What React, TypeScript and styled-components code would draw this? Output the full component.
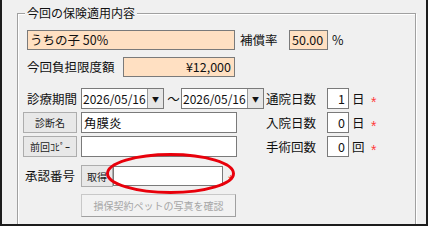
import React from 'react';
import styled, { createGlobalStyle } from 'styled-components';

const GlobalStyle = createGlobalStyle`
  html, body {
    margin: 0;
    padding: 0;
    background: #fff;
  }
  body {
    font-family: "Noto Sans CJK JP", "Noto Sans", sans-serif;
    color: #111;
  }
`;

const Window = styled.div`
  box-sizing: border-box;
  width: 428px;
  height: 226px;
  background: #f0f0f0;
  border: 2px solid #1c1c1c;
  border-top: none;
  overflow: hidden;
`;

const Group = styled.div`
  position: relative;
  box-sizing: border-box;
  width: 399px;
  height: 240px;
  margin: 13px 0 0 15px;
  padding: 16px 0 0 5px;
  border: 1px solid #a0a0a0;
  box-shadow: inset 1px 1px 0 #fff, 1px 1px 0 #fff;
  display: flex;
  flex-direction: column;
`;

const Legend = styled.span`
  position: absolute;
  top: -8px;
  left: 7px;
  padding: 0 2px;
  background: #f0f0f0;
  font-size: 12px;
  line-height: 14px;
  white-space: nowrap;
`;

const Row = styled.div<{ $cols: string; $h: number; $mt?: number; $pl?: number }>`
  display: grid;
  grid-template-columns: ${p => p.$cols};
  align-items: center;
  height: ${p => p.$h}px;
  margin-top: ${p => p.$mt ?? 0}px;
  padding-left: ${p => p.$pl ?? 0}px;
`;

const Section = styled.div`
  display: grid;
  grid-template-columns: 243px auto;
  grid-auto-rows: 21px;
  row-gap: 3px;
  margin-top: 11px;
`;

const Label = styled.span`
  font-size: 12.5px;
  line-height: 16px;
  white-space: nowrap;
`;

const Field = styled.div<{ $w: number; $h?: number; $peach?: boolean; $right?: boolean }>`
  box-sizing: border-box;
  width: ${p => p.$w}px;
  height: ${p => p.$h ?? 20}px;
  border: 1px solid #7a7a7a;
  background: ${p => (p.$peach ? '#ffe0c2' : '#fff')};
  padding: 0 ${p => (p.$right ? 3 : 2)}px 0 2px;
  font-size: 12.5px;
  line-height: ${p => (p.$h ?? 20) - 2}px;
  text-align: ${p => (p.$right ? 'right' : 'left')};
  white-space: nowrap;
  overflow: hidden;
`;

const Picker = styled.div`
  box-sizing: border-box;
  display: flex;
  width: 83px;
  height: 21px;
  border: 1px solid #7a7a7a;
  background: #fff;
`;

const PickerText = styled.span`
  flex: 1;
  padding-left: 1px;
  font-size: 12px;
  line-height: 19px;
  white-space: nowrap;
  overflow: hidden;
`;

const PickerDrop = styled.span`
  width: 15px;
  border-left: 1px solid #9a9a9a;
  background: #e6e6e6;
  display: flex;
  align-items: center;
  justify-content: center;
  font-size: 7px;
  color: #111;
`;

const Tilde = styled.span`
  font-size: 12.5px;
  text-align: center;
`;

const Btn = styled.button<{ $w: number; $h: number }>`
  box-sizing: border-box;
  width: ${p => p.$w}px;
  height: ${p => p.$h}px;
  padding: 0;
  border: 1px solid #adadad;
  background: #e8e8e8;
  font-family: inherit;
  font-size: 10px;
  color: #222;
  white-space: nowrap;
  overflow: hidden;
`;

const DisabledBtn = styled.button`
  box-sizing: border-box;
  width: 155px;
  height: 23px;
  padding: 0;
  border: 1px solid #c8c8c8;
  border-right-color: #a0a0a0;
  border-bottom-color: #a0a0a0;
  background: #f2f2f2;
  font-family: inherit;
  font-size: 10px;
  color: #a6a6a6;
  white-space: nowrap;
`;

const Required = styled.span`
  color: #ff3b3b;
  font-family: "Liberation Sans", sans-serif;
  font-size: 14px;
  line-height: 14px;
  padding-top: 7px;
`;

const Counter = styled.div`
  display: grid;
  grid-template-columns: 61px 25px 19px auto;
  align-items: center;
`;

const Mark = styled.svg`
  position: absolute;
  left: 86px;
  top: 137px;
  pointer-events: none;
`;

type CountProps = { label: string; value: string; unit: string };

const CountRow = ({ label, value, unit }: CountProps) => (
  <Counter>
    <Label>{label}</Label>
    <Field $w={22} $h={21} $right>{value}</Field>
    <Label>{unit}</Label>
    <Required>*</Required>
  </Counter>
);

const DatePicker = ({ value }: { value: string }) => (
  <Picker>
    <PickerText>{value}</PickerText>
    <PickerDrop>▼</PickerDrop>
  </Picker>
);

export default function App() {
  return (
    <>
      <GlobalStyle />
      <Window>
        <Group>
          <Legend>今回の保険適用内容</Legend>

          <Row $cols="213px 49px 43px auto" $h={20} $pl={4}>
            <Field $w={208} $peach>うちの子 50%</Field>
            <Label>補償率</Label>
            <Field $w={39} $peach>50.00</Field>
            <Label>%</Label>
          </Row>

          <Row $cols="96px auto" $h={20} $mt={7} $pl={4}>
            <Label>今回負担限度額</Label>
            <Field $w={112} $peach $right>¥12,000</Field>
          </Row>

          <Section>
            <Row $cols="54px 85px 15px 85px" $h={21} $pl={4}>
              <Label>診療期間</Label>
              <DatePicker value="2026/05/16" />
              <Tilde>～</Tilde>
              <DatePicker value="2026/05/16" />
            </Row>
            <CountRow label="通院日数" value="1" unit="日" />

            <Row $cols="58px auto" $h={21}>
              <Btn $w={54} $h={21}>診断名</Btn>
              <Field $w={156} $h={21}>角膜炎</Field>
            </Row>
            <CountRow label="入院日数" value="0" unit="日" />

            <Row $cols="58px auto" $h={21}>
              <Btn $w={54} $h={21}>前回ｺﾋﾟｰ</Btn>
              <Field $w={156} $h={21}></Field>
            </Row>
            <CountRow label="手術回数" value="0" unit="回" />
          </Section>

          <Row $cols="56px 32px 115px auto" $h={22} $mt={8} $pl={2}>
            <Label>承認番号</Label>
            <Btn $w={32} $h={22}>取得</Btn>
            <Field $w={110} $h={20}></Field>
            <Required>*</Required>
          </Row>

          <Row $cols="auto" $h={23} $mt={7} $pl={58}>
            <DisabledBtn disabled>損保契約ペットの写真を確認</DisabledBtn>
          </Row>

          <Mark width={134} height={46} viewBox="0 0 134 46">
            <ellipse cx={66.5} cy={22.5} rx={63} ry={19} fill="none" stroke="#e8000b" strokeWidth={3} />
          </Mark>
        </Group>
      </Window>
    </>
  );
}
